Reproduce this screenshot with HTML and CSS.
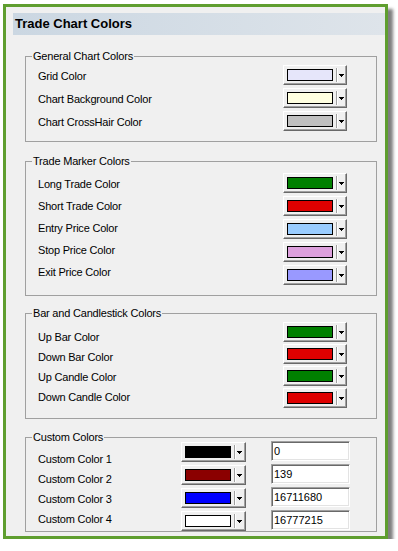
FILE: index.html
```html
<!DOCTYPE html>
<html lang="en">
<head>
    <meta charset="UTF-8">
    <title>Trade Chart Colors</title>
    <link rel="stylesheet" href="styles.css">
</head>
<body>

    <div class="window">
        <div class="title">Trade Chart Colors</div>

        <fieldset class="group group-general">
            <legend>General Chart Colors</legend>
            <div class="rows">
                <div class="labels">
                    <span>Grid Color</span>
                    <span>Chart Background Color</span>
                    <span>Chart CrossHair Color</span>
                </div>
                <div class="pickers">
                    <button class="picker"><span class="swatch sw-lavender"></span><span class="sep"></span><svg class="arrow" width="5" height="3"><rect x="0" y="0" width="5" height="1"/><rect x="1" y="1" width="3" height="1"/><rect x="2" y="2" width="1" height="1"/></svg></button>
                    <button class="picker"><span class="swatch sw-lightyellow"></span><span class="sep"></span><svg class="arrow" width="5" height="3"><rect x="0" y="0" width="5" height="1"/><rect x="1" y="1" width="3" height="1"/><rect x="2" y="2" width="1" height="1"/></svg></button>
                    <button class="picker"><span class="swatch sw-silver"></span><span class="sep"></span><svg class="arrow" width="5" height="3"><rect x="0" y="0" width="5" height="1"/><rect x="1" y="1" width="3" height="1"/><rect x="2" y="2" width="1" height="1"/></svg></button>
                </div>
            </div>
        </fieldset>

        <fieldset class="group group-markers">
            <legend>Trade Marker Colors</legend>
            <div class="rows">
                <div class="labels">
                    <span>Long Trade Color</span>
                    <span>Short Trade Color</span>
                    <span>Entry Price Color</span>
                    <span>Stop Price Color</span>
                    <span>Exit Price Color</span>
                </div>
                <div class="pickers">
                    <button class="picker"><span class="swatch sw-green"></span><span class="sep"></span><svg class="arrow" width="5" height="3"><rect x="0" y="0" width="5" height="1"/><rect x="1" y="1" width="3" height="1"/><rect x="2" y="2" width="1" height="1"/></svg></button>
                    <button class="picker"><span class="swatch sw-red"></span><span class="sep"></span><svg class="arrow" width="5" height="3"><rect x="0" y="0" width="5" height="1"/><rect x="1" y="1" width="3" height="1"/><rect x="2" y="2" width="1" height="1"/></svg></button>
                    <button class="picker"><span class="swatch sw-sky"></span><span class="sep"></span><svg class="arrow" width="5" height="3"><rect x="0" y="0" width="5" height="1"/><rect x="1" y="1" width="3" height="1"/><rect x="2" y="2" width="1" height="1"/></svg></button>
                    <button class="picker"><span class="swatch sw-plum"></span><span class="sep"></span><svg class="arrow" width="5" height="3"><rect x="0" y="0" width="5" height="1"/><rect x="1" y="1" width="3" height="1"/><rect x="2" y="2" width="1" height="1"/></svg></button>
                    <button class="picker"><span class="swatch sw-periwinkle"></span><span class="sep"></span><svg class="arrow" width="5" height="3"><rect x="0" y="0" width="5" height="1"/><rect x="1" y="1" width="3" height="1"/><rect x="2" y="2" width="1" height="1"/></svg></button>
                </div>
            </div>
        </fieldset>

        <fieldset class="group group-bars">
            <legend>Bar and Candlestick Colors</legend>
            <div class="rows">
                <div class="labels">
                    <span>Up Bar Color</span>
                    <span>Down Bar Color</span>
                    <span>Up Candle Color</span>
                    <span>Down Candle Color</span>
                </div>
                <div class="pickers">
                    <button class="picker"><span class="swatch sw-green"></span><span class="sep"></span><svg class="arrow" width="5" height="3"><rect x="0" y="0" width="5" height="1"/><rect x="1" y="1" width="3" height="1"/><rect x="2" y="2" width="1" height="1"/></svg></button>
                    <button class="picker"><span class="swatch sw-red"></span><span class="sep"></span><svg class="arrow" width="5" height="3"><rect x="0" y="0" width="5" height="1"/><rect x="1" y="1" width="3" height="1"/><rect x="2" y="2" width="1" height="1"/></svg></button>
                    <button class="picker"><span class="swatch sw-green"></span><span class="sep"></span><svg class="arrow" width="5" height="3"><rect x="0" y="0" width="5" height="1"/><rect x="1" y="1" width="3" height="1"/><rect x="2" y="2" width="1" height="1"/></svg></button>
                    <button class="picker"><span class="swatch sw-red"></span><span class="sep"></span><svg class="arrow" width="5" height="3"><rect x="0" y="0" width="5" height="1"/><rect x="1" y="1" width="3" height="1"/><rect x="2" y="2" width="1" height="1"/></svg></button>
                </div>
            </div>
        </fieldset>

        <fieldset class="group group-custom">
            <legend>Custom Colors</legend>
            <div class="rows">
                <div class="labels">
                    <span>Custom Color 1</span>
                    <span>Custom Color 2</span>
                    <span>Custom Color 3</span>
                    <span>Custom Color 4</span>
                </div>
                <div class="pickers">
                    <button class="picker picker-wide"><span class="swatch sw-black"></span><span class="sep"></span><svg class="arrow" width="5" height="3"><rect x="0" y="0" width="5" height="1"/><rect x="1" y="1" width="3" height="1"/><rect x="2" y="2" width="1" height="1"/></svg></button>
                    <button class="picker picker-wide"><span class="swatch sw-darkred"></span><span class="sep"></span><svg class="arrow" width="5" height="3"><rect x="0" y="0" width="5" height="1"/><rect x="1" y="1" width="3" height="1"/><rect x="2" y="2" width="1" height="1"/></svg></button>
                    <button class="picker picker-wide"><span class="swatch sw-blue"></span><span class="sep"></span><svg class="arrow" width="5" height="3"><rect x="0" y="0" width="5" height="1"/><rect x="1" y="1" width="3" height="1"/><rect x="2" y="2" width="1" height="1"/></svg></button>
                    <button class="picker picker-wide"><span class="swatch sw-white"></span><span class="sep"></span><svg class="arrow" width="5" height="3"><rect x="0" y="0" width="5" height="1"/><rect x="1" y="1" width="3" height="1"/><rect x="2" y="2" width="1" height="1"/></svg></button>
                </div>
                <div class="values">
                    <input class="value-box" type="text" value="0">
                    <input class="value-box" type="text" value="139">
                    <input class="value-box" type="text" value="16711680">
                    <input class="value-box" type="text" value="16777215">
                </div>
            </div>
        </fieldset>
    </div>

</body>
</html>
```

FILE: styles.css
```css
body {
    margin: 0;
    background-color: white;
    font-family: "Liberation Sans", Arial, sans-serif;
    font-size: 11px;
    color: black;
}
.window {
    box-sizing: border-box;
    width: 385px;
    height: 535px;
    margin: 4px 0 0 3px;
    padding-top: 6px;
    border: 3px solid #5f9e2f;
    background-color: #f0f0f0;
    box-shadow: 5px 5px 3px rgba(0, 0, 0, 0.5);
}
.title {
    height: 22px;
    margin-left: 7px;
    padding-left: 2px;
    line-height: 22px;
    font-size: 13px;
    font-weight: bold;
    background: linear-gradient(to right, #cbd7e2, #dee4ea);
}

/* group boxes */
.group {
    box-sizing: border-box;
    width: 352px;
    min-width: 0;
    margin: 0 0 0 19px;
    padding: 0;
    border: 1px solid #a0a0a0;
}
.group legend {
    margin-left: 6px;
    padding: 0 1px;
    line-height: 13px;
    letter-spacing: -0.2px;
}
.rows {
    display: flex;
    justify-content: space-between;
    padding: 2px 29px 9px 12px;
}
.labels {
    display: flex;
    flex-direction: column;
    gap: 3px;
    padding-top: 1px;
    line-height: 20px;
    letter-spacing: -0.2px;
}
.pickers {
    display: flex;
    flex-direction: column;
    gap: 3px;
}

.group-general { margin-top: 15px; }

.group-markers { margin-top: 13px; }
.group-markers .rows { padding: 5px 29px 10px 12px; }
.group-markers .labels { gap: 2px; }

.group-bars { margin-top: 11px; }
.group-bars .rows { padding: 2px 29px 10px 12px; }
.group-bars .labels { gap: 0; padding-top: 5px; }
.group-bars .pickers { gap: 2px; }

.group-custom { margin-top: 12px; }
.group-custom .rows {
    justify-content: flex-start;
    margin-top: -3px;
    padding: 0 26px 0 12px;
}
.group-custom .labels {
    width: 143px;
    gap: 0;
    padding-top: 8px;
}
.group-custom .pickers {
    padding-top: 1px;
    margin-right: 25px;
}
.values {
    display: flex;
    flex-direction: column;
    gap: 3px;
}

/* colour picker combo */
.picker {
    box-sizing: border-box;
    display: flex;
    align-items: center;
    width: 64px;
    height: 20px;
    margin: 0;
    padding: 0 0 0 3px;
    border-style: solid;
    border-width: 1px;
    border-color: #ffffff #696969 #696969 #ffffff;
    background-color: #f0f0f0;
    box-shadow: inset -1px -1px 0 #a0a0a0;
}
.picker-wide {
    width: 65px;
}
.swatch {
    box-sizing: border-box;
    width: 46px;
    height: 12px;
    border: 1px solid black;
}
.sep {
    width: 1px;
    height: 14px;
    margin-left: 3px;
    background-color: #a0a0a0;
    border-right: 1px solid white;
}
.arrow {
    display: block;
    margin-left: 1px;
    fill: black;
    shape-rendering: crispEdges;
}

.sw-lavender { background-color: #e6e6fa; }
.sw-lightyellow { background-color: #ffffe0; }
.sw-silver { background-color: #c0c0c0; }
.sw-green { background-color: #008000; }
.sw-red { background-color: #de0000; }
.sw-sky { background-color: #99ccff; }
.sw-plum { background-color: #dda0dd; }
.sw-periwinkle { background-color: #9999ff; }
.sw-black { background-color: #000000; }
.sw-darkred { background-color: #8b0000; }
.sw-blue { background-color: #0000ff; }
.sw-white { background-color: #ffffff; }

/* value text boxes */
.value-box {
    box-sizing: border-box;
    width: 79px;
    height: 20px;
    margin: 0;
    padding: 0 0 0 2px;
    border-style: solid;
    border-width: 1px;
    border-color: #a0a0a0 #ffffff #ffffff #a0a0a0;
    box-shadow: inset 1px 1px 0 #696969, inset -1px -1px 0 #e3e3e3;
    background-color: white;
    font-family: "Liberation Sans", Arial, sans-serif;
    font-size: 11px;
    line-height: 18px;
    color: black;
    outline: none;
}
```
